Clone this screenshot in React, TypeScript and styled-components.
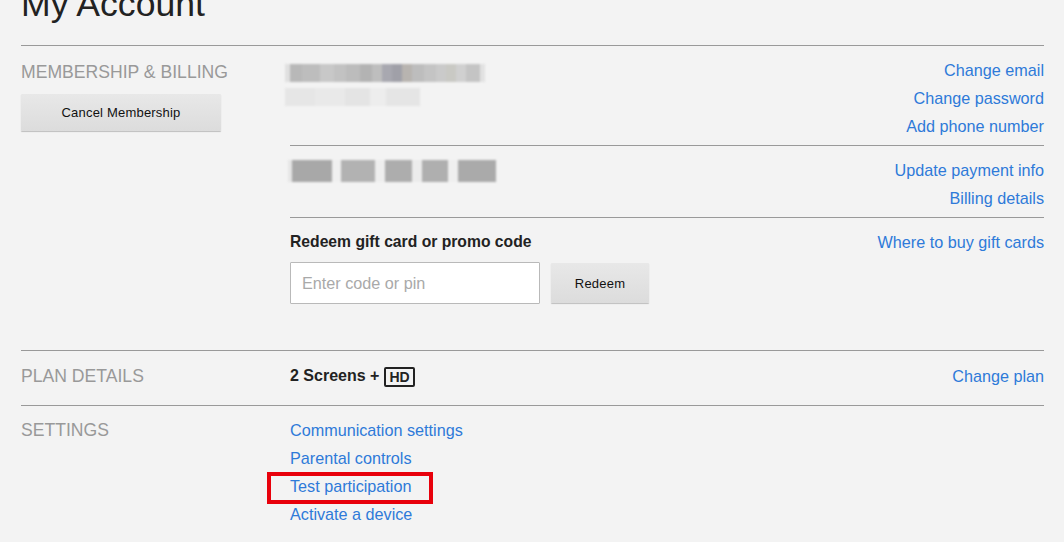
import React from 'react';
import styled, { createGlobalStyle } from 'styled-components';

const GlobalStyle = createGlobalStyle`
  html, body {
    margin: 0;
    padding: 0;
    background: #f3f3f3;
    font-family: "Liberation Sans", Arial, sans-serif;
    overflow: hidden;
  }
`;

const linkBlue = '#2e7ad9';

const Page = styled.div`
  padding: 0 20px 0 21px;
  height: 542px;
  box-sizing: border-box;
`;

const Title = styled.h1`
  margin: -16px 0 0;
  padding-bottom: 21px;
  font-size: 35.6px;
  line-height: 40px;
  font-weight: normal;
  color: #222;
  border-bottom: 1px solid #999;
`;

const Section = styled.section<{ $top: number; $bottom: number; $last?: boolean }>`
  display: grid;
  grid-template-columns: 269px 1fr;
  padding: ${({ $top }) => $top}px 0 ${({ $bottom }) => $bottom}px;
  border-bottom: ${({ $last }) => ($last ? 'none' : '1px solid #999')};
`;

const SectionLabel = styled.div`
  display: flex;
  flex-direction: column;
  align-items: flex-start;
`;

const LabelText = styled.h2<{ $pad?: number }>`
  margin: 0;
  font-size: 17.6px;
  line-height: 28px;
  padding-top: ${({ $pad }) => $pad ?? 0}px;
  font-weight: normal;
  color: #999;
`;

const GreyButton = styled.button<{ $w: number; $h: number }>`
  width: ${({ $w }) => $w}px;
  height: ${({ $h }) => $h}px;
  border: none;
  border-radius: 1px;
  background: linear-gradient(#e8e8e8, #dcdcdc);
  box-shadow: 0 1px 1px rgba(0, 0, 0, 0.22);
  font-family: "Liberation Sans", Arial, sans-serif;
  font-size: 13px;
  color: #111;
  letter-spacing: 0.2px;
  cursor: pointer;
`;

const CancelButton = styled(GreyButton)`
  margin-top: 8px;
`;

const Content = styled.div`
  display: flex;
  flex-direction: column;
`;

const SubRow = styled.div<{ $top: number; $bottom: number; $last?: boolean }>`
  display: flex;
  justify-content: space-between;
  align-items: flex-start;
  padding: ${({ $top }) => $top}px 0 ${({ $bottom }) => $bottom}px;
  border-bottom: ${({ $last }) => ($last ? 'none' : '1px solid #999')};
`;

const LinkList = styled.div<{ $align?: 'left' | 'right' }>`
  display: flex;
  flex-direction: column;
  align-items: ${({ $align }) => ($align === 'left' ? 'flex-start' : 'flex-end')};
`;

const Link = styled.a<{ $marked?: boolean }>`
  position: relative;
  display: block;
  font-size: 16.2px;
  line-height: 28px;
  color: ${linkBlue};
  text-decoration: none;
  cursor: pointer;

  ${({ $marked }) =>
    $marked &&
    `
    &::after {
      content: '';
      position: absolute;
      left: -23px;
      top: 0;
      width: 158px;
      height: 24px;
      border: 4px solid #e8000b;
    }
  `}
`;

const Mosaic = styled.div<{ $h: number; $ml?: number; $mt?: number }>`
  display: flex;
  height: ${({ $h }) => $h}px;
  margin-left: ${({ $ml }) => $ml ?? 0}px;
  margin-top: ${({ $mt }) => $mt ?? 0}px;
  filter: blur(0.8px);
`;

const Cell = styled.span<{ $w: number; $c: string }>`
  display: block;
  width: ${({ $w }) => $w}px;
  height: 100%;
  background: ${({ $c }) => $c};
`;

const Blurred = styled.div`
  display: flex;
  flex-direction: column;
`;

const Strong = styled.div`
  font-size: 15.7px;
  line-height: 28px;
  font-weight: bold;
  color: #222;
`;

const RedeemForm = styled.form`
  display: flex;
  align-items: center;
  gap: 11px;
  margin-top: 6px;
`;

const CodeInput = styled.input`
  width: 250px;
  height: 42px;
  box-sizing: border-box;
  padding: 0 11px;
  border: 1px solid #b9b9b9;
  border-radius: 1px;
  background: #fff;
  font-family: "Liberation Sans", Arial, sans-serif;
  font-size: 16.2px;
  color: #333;

  &::placeholder {
    color: #a9a9a9;
  }
`;

const PlanText = styled.div`
  display: flex;
  align-items: center;
  gap: 5px;
  font-size: 16px;
  line-height: 28px;
  font-weight: bold;
  color: #222;
`;

const HdBadge = styled.span`
  display: inline-block;
  padding: 0 3px;
  height: 16px;
  line-height: 16px;
  border: 2px solid #222;
  border-radius: 2px;
  font-size: 14px;
  font-weight: bold;
  margin-top: 2px;
`;

const emailCells: [number, string][] = [
  [5, '#e0e0e0'], [12, '#b8b8b8'], [18, '#bdbdbd'], [14, '#c8c8c8'], [12, '#c2c2c2'],
  [14, '#bcbcbc'], [12, '#b3b3b3'], [10, '#bebebe'], [10, '#a8a8b0'], [10, '#a0a0a8'],
  [10, '#b8b4b0'], [12, '#bdbdbd'], [12, '#c4c4c4'], [10, '#cacaca'], [10, '#c9c9c4'],
  [10, '#d0d0d0'], [14, '#c4c4c4'], [5, '#e2e2e2'],
];

const passwordCells: [number, string][] = [
  [30, '#e6e6e6'], [30, '#e9e9e9'], [25, '#e4e4e4'], [16, '#ededed'], [34, '#e5e5e5'],
];

const cardCells: [number, string][] = [
  [4, '#e6e6e6'], [40, '#a8a8a8'], [9, '#f0f0f0'], [34, '#b2b2b2'], [10, '#eeeeee'],
  [27, '#adadad'], [10, '#ececec'], [26, '#afafaf'], [10, '#efefef'], [38, '#aaaaaa'],
];

const renderCells = (cells: [number, string][]) =>
  cells.map(([w, c], i) => <Cell key={i} $w={w} $c={c} />);

const App = () => {
  return (
    <>
      <GlobalStyle />
      <Page>
        <Title>My Account</Title>

        <Section $top={10} $bottom={46}>
          <SectionLabel>
            <LabelText $pad={2}>MEMBERSHIP &amp; BILLING</LabelText>
            <CancelButton $w={200} $h={37}>Cancel Membership</CancelButton>
          </SectionLabel>
          <Content>
            <SubRow $top={0} $bottom={5}>
              <Blurred>
                <Mosaic $h={18} $ml={-5} $mt={8}>{renderCells(emailCells)}</Mosaic>
                <Mosaic $h={18} $ml={-5} $mt={6}>{renderCells(passwordCells)}</Mosaic>
              </Blurred>
              <LinkList>
                <Link>Change email</Link>
                <Link>Change password</Link>
                <Link>Add phone number</Link>
              </LinkList>
            </SubRow>
            <SubRow $top={10} $bottom={5}>
              <Mosaic $h={22} $ml={-2} $mt={4}>{renderCells(cardCells)}</Mosaic>
              <LinkList>
                <Link>Update payment info</Link>
                <Link>Billing details</Link>
              </LinkList>
            </SubRow>
            <SubRow $top={10} $bottom={0} $last>
              <div>
                <Strong>Redeem gift card or promo code</Strong>
                <RedeemForm onSubmit={(e) => e.preventDefault()}>
                  <CodeInput placeholder="Enter code or pin" />
                  <GreyButton $w={98} $h={40} type="submit">Redeem</GreyButton>
                </RedeemForm>
              </div>
              <LinkList>
                <Link>Where to buy gift cards</Link>
              </LinkList>
            </SubRow>
          </Content>
        </Section>

        <Section $top={11} $bottom={15}>
          <SectionLabel>
            <LabelText>PLAN DETAILS</LabelText>
          </SectionLabel>
          <SubRow $top={0} $bottom={0} $last>
            <PlanText>
              2 Screens + <HdBadge>HD</HdBadge>
            </PlanText>
            <LinkList>
              <Link>Change plan</Link>
            </LinkList>
          </SubRow>
        </Section>

        <Section $top={10} $bottom={0} $last>
          <SectionLabel>
            <LabelText>SETTINGS</LabelText>
          </SectionLabel>
          <LinkList $align="left">
            <Link>Communication settings</Link>
            <Link>Parental controls</Link>
            <Link $marked>Test participation</Link>
            <Link>Activate a device</Link>
            <Link>Sign out of all devices</Link>
          </LinkList>
        </Section>
      </Page>
    </>
  );
};

export default App;
